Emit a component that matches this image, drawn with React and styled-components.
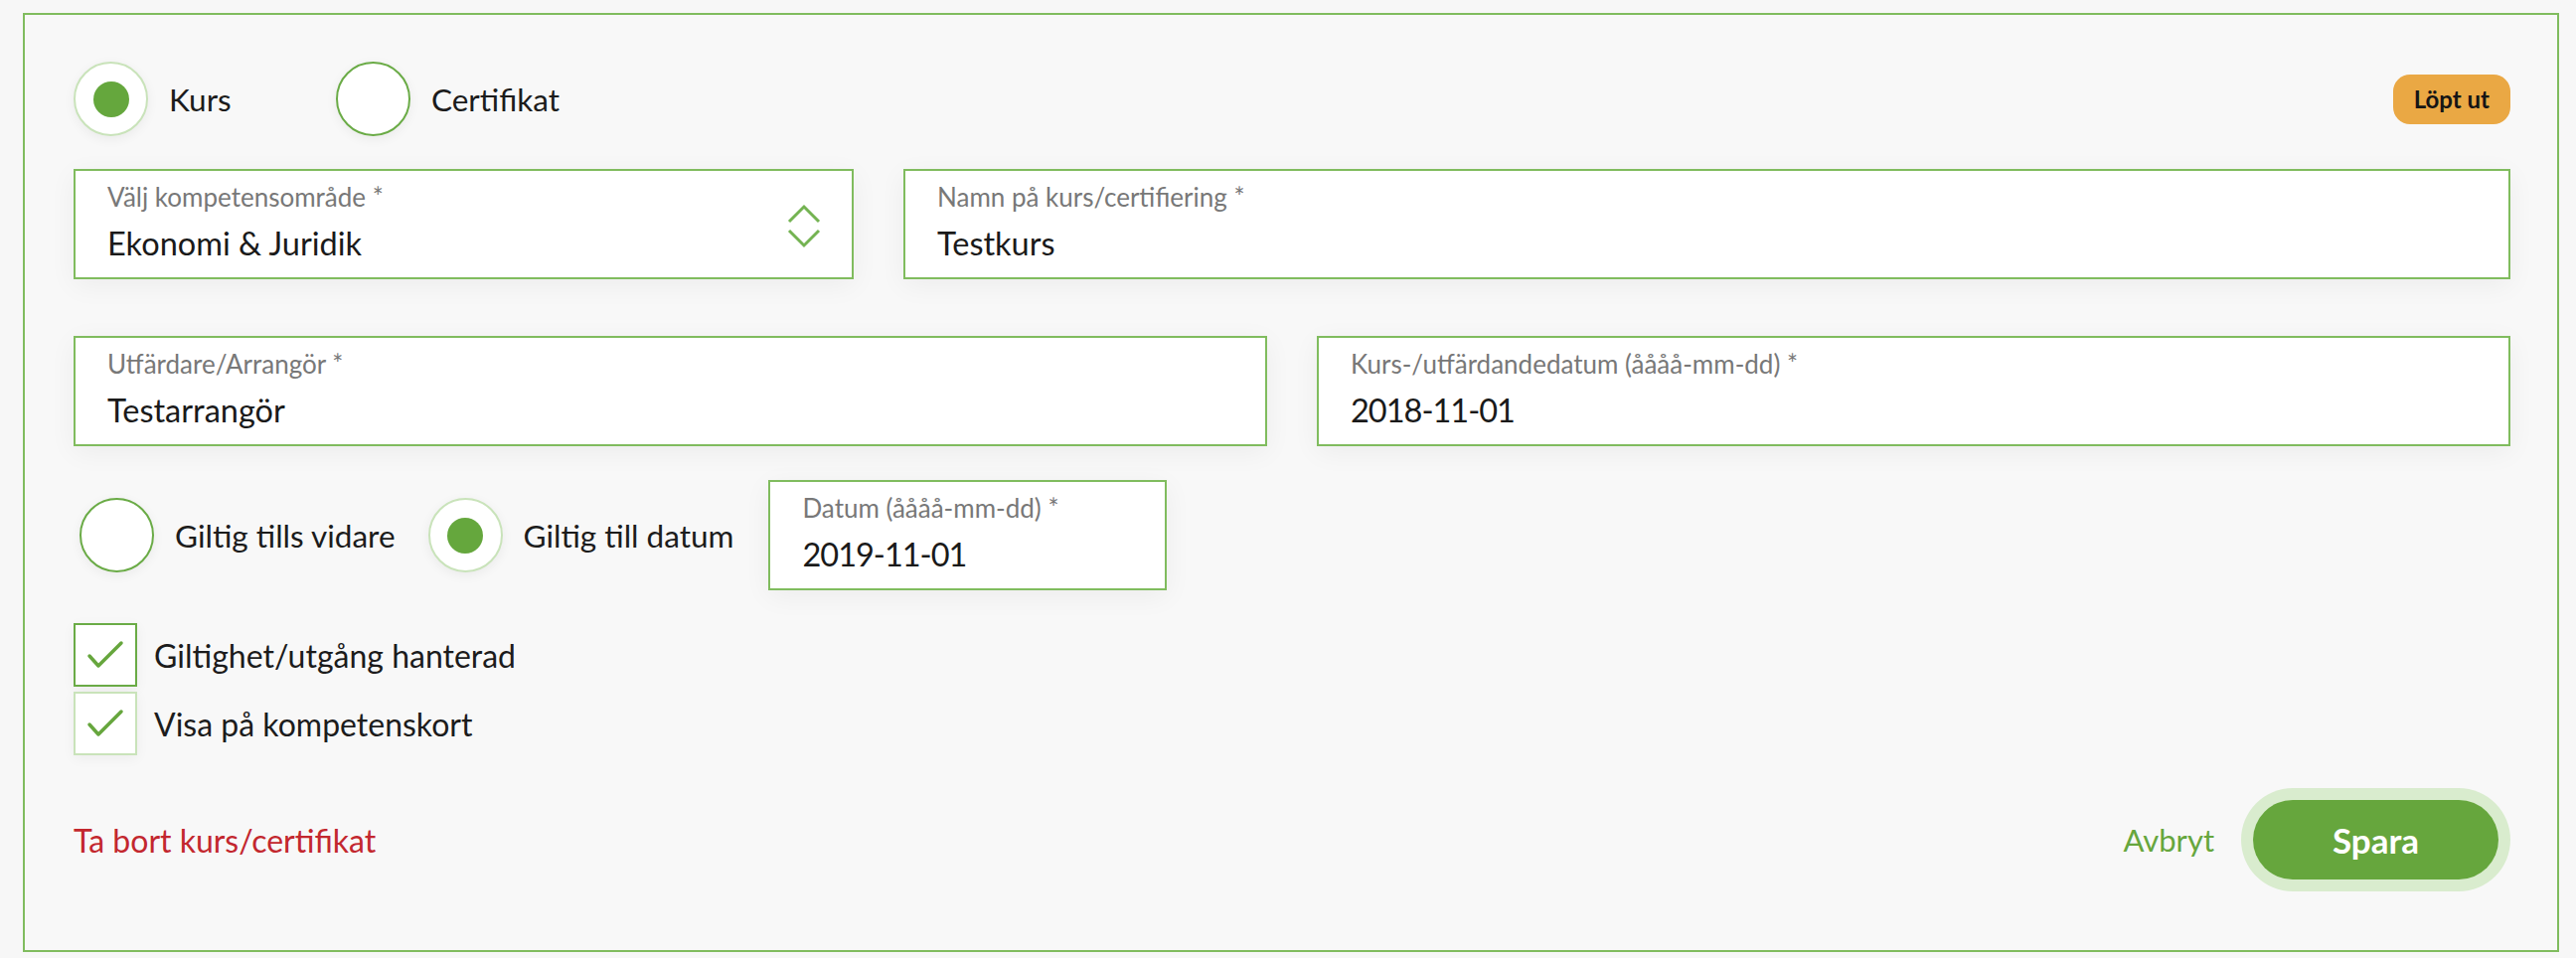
import React from "react";
import styled, { createGlobalStyle } from "styled-components";

const GlobalStyle = createGlobalStyle`
  html, body { margin: 0; padding: 0; background: #f7f7f7; }
  body { font-family: Lato, "Open Sans", Arial, sans-serif; color: #1c1c1c; }
  * { box-sizing: border-box; }
`;

const Page = styled.div`
  padding: 13px 17px 9px 23px;
`;

const Card = styled.section`
  border: 2px solid #80bc5e;
  background: #f8f8f8;
  padding: 47px 47px 71px 49px;
`;

const TypeRow = styled.div`
  display: flex;
  align-items: center;
  justify-content: space-between;
`;

const RadioGroup = styled.div`
  display: flex;
  align-items: center;
`;

const RadioOption = styled.label`
  display: flex;
  align-items: center;
  gap: 21px;
  min-width: ${(p) => p.$minWidth || 0}px;
  margin-left: ${(p) => p.$offset || 0}px;
  margin-right: ${(p) => p.$gapAfter || 0}px;
  font-size: 31.5px;
  color: #1c1c1c;
  cursor: pointer;
`;

const RadioCircle = styled.span`
  width: 75px;
  height: 75px;
  border-radius: 50%;
  background: #fff;
  border: 2px solid ${(p) => (p.$checked ? "#c9e3ba" : "#6aab46")};
  box-shadow: 0 3px 12px rgba(0, 0, 0, 0.06);
  display: flex;
  align-items: center;
  justify-content: center;
  flex: none;
`;

const RadioDot = styled.span`
  width: 36px;
  height: 36px;
  border-radius: 50%;
  background: #65a73d;
`;

const Badge = styled.span`
  background: #eaa844;
  color: #151515;
  font-weight: 700;
  font-size: 24px;
  height: 50px;
  padding: 0 21px;
  border-radius: 17px;
  display: inline-flex;
  align-items: center;
`;

const FieldRow = styled.div`
  display: grid;
  grid-template-columns: ${(p) => p.$cols};
  gap: 50px;
  margin-top: ${(p) => p.$top}px;
`;

const Field = styled.div`
  position: relative;
  height: 111px;
  width: ${(p) => (p.$width ? `${p.$width}px` : "auto")};
  background: #fff;
  border: 2px solid #80bc5e;
  box-shadow: 0 6px 26px rgba(0, 0, 0, 0.05);
  padding: 11px 32px 0 32px;
  display: flex;
  align-items: flex-start;
  justify-content: space-between;
`;

const FieldText = styled.div`
  display: flex;
  flex-direction: column;
`;

const Label = styled.span`
  font-size: 26px;
  line-height: 30px;
  color: #787878;
`;

const Value = styled.span`
  margin-top: 13px;
  font-size: 32.5px;
  line-height: 38px;
  color: #1a1a1a;
  letter-spacing: ${(p) => (p.$date ? "-1px" : "0")};
`;

const Chevrons = styled.svg`
  margin-top: 22px;
  margin-right: -2px;
  flex: none;
`;

const ValidityRow = styled.div`
  display: flex;
  align-items: center;
  margin-top: 34px;
`;

const CheckList = styled.div`
  display: flex;
  flex-direction: column;
  gap: 5px;
  margin-top: 33px;
`;

const CheckOption = styled.label`
  display: flex;
  align-items: center;
  gap: 17px;
  font-size: 32px;
  color: #1c1c1c;
`;

const CheckBox = styled.span`
  width: 64px;
  height: 64px;
  background: #fff;
  border: 2px solid ${(p) => (p.$strong ? "#6aab46" : "#c9e3ba")};
  box-shadow: 0 3px 12px rgba(0, 0, 0, 0.05);
  display: flex;
  align-items: center;
  justify-content: center;
  flex: none;
`;

const Footer = styled.div`
  display: flex;
  align-items: center;
  justify-content: space-between;
  margin-top: 45px;
  padding-right: 12px;
`;

const DangerLink = styled.button`
  background: none;
  border: 0;
  padding: 0;
  font-family: inherit;
  font-size: 32px;
  color: #c3272e;
  cursor: pointer;
`;

const Actions = styled.div`
  display: flex;
  align-items: center;
  gap: 39px;
`;

const CancelLink = styled.button`
  background: none;
  border: 0;
  padding: 0;
  font-family: inherit;
  font-size: 31px;
  color: #66a63d;
  cursor: pointer;
`;

const SaveButton = styled.button`
  width: 247px;
  height: 80px;
  border-radius: 40px;
  border: 0;
  background: #66a63d;
  box-shadow: 0 0 0 12px #d9ecce;
  color: #fff;
  font-family: inherit;
  font-weight: 700;
  font-size: 35px;
  cursor: pointer;
`;

const Check = () => (
  <svg width="40" height="32" viewBox="0 0 40 32" aria-hidden="true">
    <path d="M4 17 L13 27 L36 4" fill="none" stroke="#66a63d" strokeWidth="3.5" strokeLinecap="round" strokeLinejoin="round" />
  </svg>
);

const Radio = ({ checked, label, ...rest }) => (
  <RadioOption {...rest}>
    <RadioCircle $checked={checked}>{checked && <RadioDot />}</RadioCircle>
    <span>{label}</span>
  </RadioOption>
);

export default function App() {
  return (
    <>
      <GlobalStyle />
      <Page>
        <Card>
          <TypeRow>
            <RadioGroup>
              <Radio checked label="Kurs" $minWidth={264} />
              <Radio label="Certifikat" />
            </RadioGroup>
            <Badge>Löpt ut</Badge>
          </TypeRow>

          <FieldRow $cols="785px 1fr" $top={33}>
            <Field>
              <FieldText>
                <Label>Välj kompetensområde *</Label>
                <Value>Ekonomi &amp; Juridik</Value>
              </FieldText>
              <Chevrons width="36" height="46" viewBox="0 0 36 46" aria-hidden="true">
                <path d="M3 18 L18 3 L33 18" fill="none" stroke="#74b352" strokeWidth="3" strokeLinejoin="miter" />
                <path d="M3 27 L18 42 L33 27" fill="none" stroke="#74b352" strokeWidth="3" strokeLinejoin="miter" />
              </Chevrons>
            </Field>
            <Field>
              <FieldText>
                <Label>Namn på kurs/certifiering *</Label>
                <Value>Testkurs</Value>
              </FieldText>
            </Field>
          </FieldRow>

          <FieldRow $cols="1fr 1fr" $top={57}>
            <Field>
              <FieldText>
                <Label>Utfärdare/Arrangör *</Label>
                <Value>Testarrangör</Value>
              </FieldText>
            </Field>
            <Field>
              <FieldText>
                <Label>Kurs-/utfärdandedatum (åååå-mm-dd) *</Label>
                <Value $date>2018-11-01</Value>
              </FieldText>
            </Field>
          </FieldRow>

          <ValidityRow>
            <Radio label="Giltig tills vidare" $offset={6} $gapAfter={33} />
            <Radio checked label="Giltig till datum" $gapAfter={35} />
            <Field $width={401}>
              <FieldText>
                <Label>Datum (åååå-mm-dd) *</Label>
                <Value $date>2019-11-01</Value>
              </FieldText>
            </Field>
          </ValidityRow>

          <CheckList>
            <CheckOption>
              <CheckBox $strong>
                <Check />
              </CheckBox>
              Giltighet/utgång hanterad
            </CheckOption>
            <CheckOption>
              <CheckBox>
                <Check />
              </CheckBox>
              Visa på kompetenskort
            </CheckOption>
          </CheckList>

          <Footer>
            <DangerLink>Ta bort kurs/certifikat</DangerLink>
            <Actions>
              <CancelLink>Avbryt</CancelLink>
              <SaveButton>Spara</SaveButton>
            </Actions>
          </Footer>
        </Card>
      </Page>
    </>
  );
}
